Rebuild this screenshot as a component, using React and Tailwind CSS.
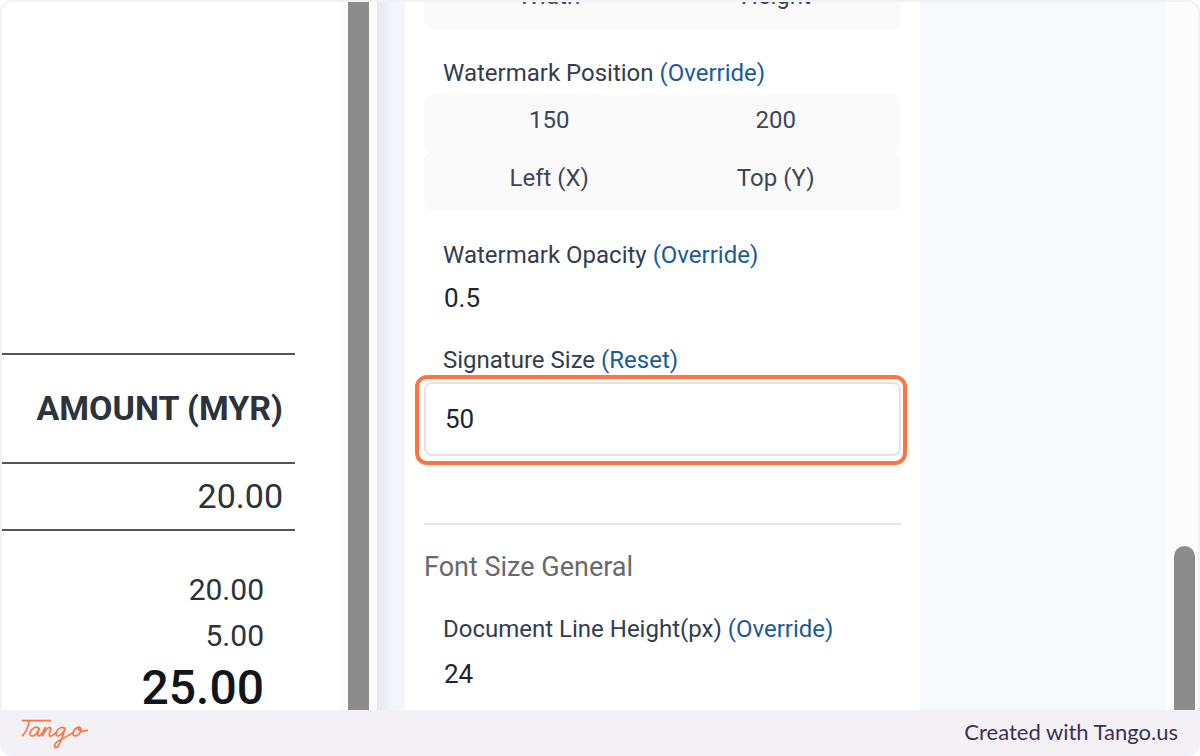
const lineItems = [{ id: 1, amount: "20.00" }];

const totals = ["20.00", "5.00"];

function TangoLogo() {
  return (
    <svg
      viewBox="0 0 210 99"
      className="h-[33px] w-[70px]"
      fill="none"
      stroke="#ff7442"
      strokeWidth="5"
      strokeLinecap="round"
      strokeLinejoin="round"
      role="img"
      aria-label="Tango"
    >
      <path d="M7 11H91" />
      <path d="M28 11C25 27 18 46 8 56" />
      <path d="M57 36C52 27 41 30 35 38C28 47 28 56 35 57C44 58 53 46 58 34C54 44 50 56 56 57C61 57 67 50 76 31L67 57C73 45 83 30 90 31C97 33 83 53 89 57C94 59 102 53 108 47" />
      <path d="M134 36C129 28 119 31 113 39C106 48 107 56 113 57C122 57 131 45 136 33C130 52 122 79 113 89C107 95 102 90 104 83C108 71 137 63 158 47" />
      <path d="M180 31C170 28 158 41 159 51C161 62 177 56 182 44C185 36 182 31 176 32C172 38 181 46 202 40" />
    </svg>
  );
}

function FieldLabel({ htmlFor, text, action }) {
  return (
    <div className="px-[19px] text-2xl leading-8 whitespace-nowrap text-[#333c50]">
      <label htmlFor={htmlFor}>{text}</label>{" "}
      <a href="#" className="text-[#1a5a9c]">
        {action}
      </a>
    </div>
  );
}

function PairRow({ children }) {
  return (
    <div className="grid h-[58px] grid-cols-2 rounded-lg bg-[#fafafa] px-3 pt-[9px] text-center text-2xl leading-8 text-[#3f4658]">
      {children}
    </div>
  );
}

function Invoice() {
  return (
    <section className="w-[338px] shrink-0 overflow-hidden bg-white pt-[351px] text-[#2b333b]">
      <table className="w-[293px] border-collapse text-right">
        <thead>
          <tr className="h-[109px] border-y-2 border-[#555]">
            <th className="pr-3 text-right text-[34px] font-bold whitespace-nowrap">AMOUNT (MYR)</th>
          </tr>
        </thead>
        <tbody>
          {lineItems.map((item) => (
            <tr key={item.id} className="h-[67px] border-b-2 border-[#555]">
              <td className="pr-3 text-[34px]">{item.amount}</td>
            </tr>
          ))}
        </tbody>
      </table>
      <div className="w-[262px] pt-9 text-right text-[30px] leading-[46px]">
        {totals.map((total) => (
          <p key={total}>{total}</p>
        ))}
        <p className="text-5xl leading-[58px] font-medium text-[#11161b]">25.00</p>
      </div>
    </section>
  );
}

function Settings() {
  return (
    <section className="w-[515px] shrink-0 overflow-hidden bg-white px-[19px]">
      <form className="-mt-[31px]">
        <PairRow>
          <span>Width</span>
          <span>Height</span>
        </PairRow>

        <div className="mt-7">
          <FieldLabel htmlFor="position-x" text="Watermark Position" action="(Override)" />
        </div>
        <div className="mt-[6px]">
          <PairRow>
            <input id="position-x" className="h-8 min-w-0 text-center" defaultValue="150" />
            <input id="position-y" className="h-8 min-w-0 text-center" defaultValue="200" />
          </PairRow>
          <PairRow>
            <label htmlFor="position-x">Left (X)</label>
            <label htmlFor="position-y">Top (Y)</label>
          </PairRow>
        </div>

        <div className="mt-7">
          <FieldLabel htmlFor="opacity" text="Watermark Opacity" action="(Override)" />
        </div>
        <input
          id="opacity"
          className="mt-[9px] block h-9 w-full px-5 text-[26px] text-[#21252f]"
          defaultValue="0.5"
        />

        <div className="mt-7">
          <FieldLabel htmlFor="signature" text="Signature Size" action="(Reset)" />
        </div>
        <div className="relative mt-[6px]">
          <input
            id="signature"
            className="block h-[74px] w-full rounded-lg border-2 border-[#e3e3e3] bg-white px-[19px] text-[26px] text-[#21252f]"
            defaultValue="50"
          />
          {/* highlight ring */}
          <div className="pointer-events-none absolute -top-[7px] -right-[6px] -bottom-[9px] -left-[9px] rounded-xl border-4 border-[#ff7442]" />
        </div>

        <hr className="mt-[67px] border-t-2 border-[#e6e6e6]" />
        <h2 className="mt-6 text-[27px] leading-9 text-[#6a6a6a]">Font Size General</h2>

        <div className="mt-7">
          <FieldLabel htmlFor="line-height" text="Document Line Height(px)" action="(Override)" />
        </div>
        <input
          id="line-height"
          className="mt-[11px] block h-9 w-full px-5 text-[26px] text-[#21252f]"
          defaultValue="24"
        />
      </form>
    </section>
  );
}

export default function App() {
  return (
    <div className="flex h-screen flex-col overflow-hidden rounded-xl bg-[#f3f1f6] font-[Roboto,sans-serif]">
      <main className="mx-[2px] mt-[2px] flex min-h-0 flex-1 overflow-hidden rounded-t-[10px] bg-[#f8f9fd]">
        <Invoice />
        <div className="w-[37px] shrink-0 bg-[#fcfcfc] px-2">
          <div className="h-full bg-[#8b8b8b]" />
        </div>
        <div className="w-7 shrink-0 bg-linear-to-r from-[#e7e8ec] to-[#f5f6fb] to-60%" />
        <Settings />
        <div className="flex-1" />
        <div className="flex w-8 shrink-0 flex-col bg-[#fcfcfc] pr-[3px] pl-2">
          <div className="basis-[544px]" />
          <div className="min-h-0 flex-1 rounded-t-full bg-[#8b8b8b]" />
        </div>
      </main>
      <footer className="flex h-[46px] shrink-0 items-center justify-between pr-[22px] pl-5">
        <TangoLogo />
        <p className="pb-1 font-[Lato,sans-serif] text-[22px] text-[#3f2f56]">Created with Tango.us</p>
      </footer>
    </div>
  );
}
